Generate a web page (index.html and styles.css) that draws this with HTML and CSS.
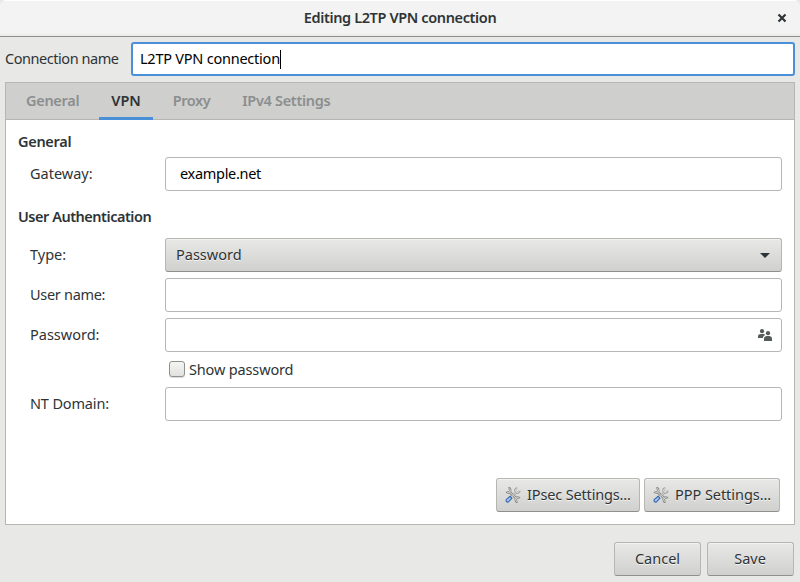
FILE: index.html
```
<!DOCTYPE html>
<html lang="en">
<head>
<meta charset="utf-8">
<title>Editing L2TP VPN connection</title>
<link rel="stylesheet" href="styles.css">
</head>
<body>
<svg width="0" height="0" class="defs">
  <symbol id="tools" viewBox="0 0 16 16">
    <path d="M4 4.500 12 12" stroke="#888a85" stroke-width="2.600"/>
    <path d="M1.500 4.500C2.500 6.300 5.500 5.500 5.300 3.200 5.200 2 4.300 1 3.300 1M14.500 11.500C13.500 9.700 10.500 10.500 10.700 12.800c.1 1.200 1 2.200 2 2.200" stroke="#888a85" stroke-width="2.400"/>
    <path d="M4 4.500 12 12M1.700 4.500C2.500 6.300 5.500 5.500 5.300 3.200 5.200 2.200 4.300 1.200 3.500 1.200M14.300 11.500C13.500 9.700 10.500 10.500 10.700 12.800c.1 1 1 2 1.800 2" stroke="#deded9" stroke-width="1"/>
    <path d="M11.300 5.500 7 9.600" stroke="#999b96" stroke-width="2"/>
    <path d="M12.300 1.300C10.200 1.500 9.700 3.500 10.700 4.900c1.500 1.400 3.700.6 4-1.300" stroke="#9a9c97" stroke-width="2"/>
    <path d="M12.300 1.500C10.500 1.700 10 3.500 10.900 4.700c1.200 1.200 3.200.5 3.500-1M11.300 5.500 7 9.600" stroke="#f4f4f2" stroke-width=".8"/>
    <path d="M5.200 9.300 1.500 12.300c-1.200 1.300.2 3.400 2 2.600L6.900 11.200z" fill="#a9c8ee" stroke="#3468b0" stroke-width="1.100"/>
  </symbol>
</svg>
<header class="titlebar">
  <h1 class="title"><span class="t-title">Editing L2TP VPN connection</span></h1>
  <svg class="close" width="10" height="10" viewBox="0 0 10 10"><path d="M1.500 1.500 8.500 8.500M8.500 1.500 1.500 8.500" stroke="#2e3436" stroke-width="2.200"/></svg>
</header>
<div class="name-row">
  <span class="name-label">Connection name</span>
  <div class="entry focus"><span class="t-name">L2TP VPN connection</span><i class="caret"></i></div>
</div>
<main class="notebook">
  <nav class="tabs">
    <span class="tab"><span class="t-gen">General</span></span><span class="tab active"><span class="t-vpn">VPN</span></span><span class="tab"><span class="t-proxy">Proxy</span></span><span class="tab"><span class="t-ip">IPv4 Settings</span></span>
  </nav>
  <section class="page">
    <h2 class="t-gen">General</h2>
    <div class="row"><label class="t-gateway">Gateway:</label><div class="entry gateway"><span class="t-example">example.net</span></div></div>
    <h2 class="auth t-auth">User Authentication</h2>
    <div class="row"><label class="t-type">Type:</label><div class="button combo"><span class="t-pw">Password</span><svg width="10" height="5" viewBox="0 0 10 5"><path d="M0 0h10L5 5z" fill="#2e3436"/></svg></div></div>
    <div class="row"><label class="t-user">User name:</label><div class="entry"></div></div>
    <div class="row"><label class="t-pwl">Password:</label><div class="entry password"><svg width="16" height="16" viewBox="0 0 16 16" fill="#555a5b"><circle cx="5" cy="4.200" r="2.100"/><path d="M1 11V9.300C1 7.800 2.300 7 4 7h2c1 0 1.800.3 2.200 1-1.500.5-2.200 1.500-2.200 3z"/><circle cx="11" cy="6.200" r="2.100"/><path d="M7 14v-2.200C7 9.900 8.300 9 10 9h2c1.700 0 3 .9 3 2.800V14z"/></svg></div></div>
    <div class="check"><i class="box"></i><span class="t-show">Show password</span></div>
    <div class="row"><label class="t-nt">NT Domain:</label><div class="entry"></div></div>
    <div class="extras">
      <div class="button ipsec"><svg width="16" height="16" fill="none"><use href="#tools"/></svg><span class="t-ipsec">IPsec Settings...</span></div>
      <div class="button ppp"><svg width="16" height="16" fill="none"><use href="#tools"/></svg><span class="t-ppp">PPP Settings...</span></div>
    </div>
  </section>
</main>
<footer class="actions">
  <div class="button cancel"><span class="t-cancel">Cancel</span></div>
  <div class="button save"><span class="t-save">Save</span></div>
</footer>
</body>
</html>
```
FILE: styles.css
```
* { box-sizing: border-box; }
body {
  margin: 0; width: 800px; height: 582px; overflow: hidden;
  background: #e8e8e7; color: #2e3436;
  font: 14.5px/20px "Noto Sans", sans-serif;
  display: flex; flex-direction: column; white-space: nowrap;
}
.defs { position: absolute; }
h1, h2 { margin: 0; font-size: 14.5px; font-weight: 600; }
.titlebar {
  height: 37px; flex: none; display: grid; grid-template-columns: 40px 1fr 40px; align-items: center;
  background: linear-gradient(#fff 0 1px, #f3f3f3 1px 33px, #e9e9e7 36px);
  border-bottom: 1px solid #8d8f89; border-radius: 6px 6px 0 0;
}
.title { grid-column: 2; text-align: center; padding-bottom: 2px; }
.close { margin-left: 17px; }
.name-row { display: flex; align-items: center; padding: 5px 5px 0; height: 39px; flex: none; }
.name-label { width: 126px; letter-spacing: -.45px; padding-bottom: 2px; }
.entry {
  flex: 1; height: 34px; background: #fff; color: #000; border: 1px solid #b6b6b3; border-radius: 3px;
  display: flex; align-items: center; padding: 0 8px;
}
.entry span, .button span, .check span, .row label { padding-bottom: 2px; }
.focus { border: 2px solid #4a90d9; padding: 0 7px; }
.caret { width: 1px; height: 19px; background: #000; }
.notebook {
  margin: 6px 5px 0; height: 443px; flex: none; background: #fff; border: 1px solid #b6b6b3;
}
.tabs { height: 37px; background: #cfcfcd; border-bottom: 1px solid #b6b6b3; display: flex; padding-left: 8px; gap: 8px; }
.tab { height: 37px; padding: 0 12px 3px; font-weight: 600; color: #8b8e8f; display: flex; align-items: center; }
.active { color: #2e3436; border-bottom: 3px solid #4a90d9; padding-bottom: 0; }
.page { padding: 11px 12px; }
.row { display: flex; align-items: center; margin-bottom: 6px; padding-left: 12px; }
.row label { width: 135px; }
.page h2 + .row { margin-top: 6px; }
.gateway { padding-left: 14px; }
.page .auth { margin-top: 15px; }
.page .auth + .row { margin-top: 12px; }
.button {
  height: 34px; display: flex; align-items: center; justify-content: center;
  border: 1px solid #b6b6b3; border-bottom-color: #91918c; border-radius: 3px;
  background: linear-gradient(#e8e8e7, #d0d0ce); box-shadow: inset 0 1px #f2f2f1; text-shadow: 0 1px #f5f5f4;
}
.combo { flex: 1; justify-content: space-between; padding: 0 11px 0 10px; }
.password { justify-content: flex-end; }
.check { height: 23px; display: flex; align-items: center; margin: 0 0 6px 151px; gap: 4px; }
.box { width: 16px; height: 16px; margin-bottom: 1px; border: 1px solid #91918c; border-radius: 3px; background: linear-gradient(#f5f5f4, #e0e0de); box-shadow: 0 1px #dcdcda; }
.extras { display: flex; justify-content: flex-end; gap: 4px; margin: 57px 2px 0 0; }
.ipsec, .ppp { justify-content: flex-start; padding-left: 8px; gap: 6px; }
.ipsec { width: 144px; }
.ppp { width: 136px; }
.actions { display: flex; justify-content: flex-end; gap: 6px; padding: 17px 6px 0 0; }
.cancel, .save { width: 87px; }
.save { padding-right: 1px; }
.t-title { letter-spacing: -.37px; }
.t-gen, .t-ip { letter-spacing: -.3px; }
.t-proxy { letter-spacing: -.45px; }
.t-auth { letter-spacing: -.48px; }
.t-name { letter-spacing: -.23px; }
.t-example, .t-user { letter-spacing: -.3px; }
.t-show, .t-ipsec { letter-spacing: -.15px; }
.t-nt { letter-spacing: -.15px; }
.t-ppp { letter-spacing: -.05px; }
```
